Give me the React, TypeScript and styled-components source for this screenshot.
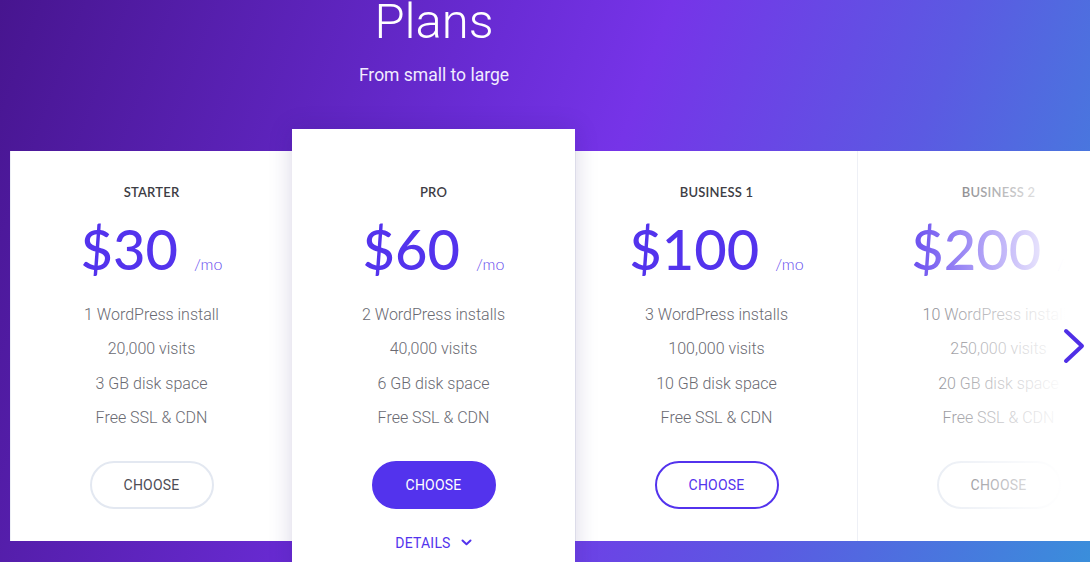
import React from "react";
import styled, { createGlobalStyle, css } from "styled-components";

const Global = createGlobalStyle`
  html, body { margin: 0; padding: 0; }
  body { width: 1090px; height: 562px; overflow: hidden; font-family: Roboto, "Liberation Sans", sans-serif; }
`;

const Page = styled.div`
  position: relative;
  width: 1090px;
  height: 562px;
  overflow: hidden;
  background: linear-gradient(110deg, #47158f 0%, #6a2cd6 40%, #7634e8 52%, #5b5ae2 75%, #3a8edb 100%);
`;

const Header = styled.header`
  width: 868px;
  display: flex;
  flex-direction: column;
  align-items: center;
  color: #fff;
`;

const Title = styled.h1`
  margin: -6px 0 0;
  font-family: Roboto, sans-serif;
  font-weight: 300;
  font-size: 49px;
  line-height: 56px;
`;

const Subtitle = styled.p`
  margin: 15px 0 0;
  font-family: Roboto, sans-serif;
  font-weight: 400;
  font-size: 17.5px;
  line-height: 20px;
  color: #f1ecff;
`;

const Row = styled.div`
  display: flex;
  align-items: flex-start;
  margin: 44px 0 0 10px;
`;

const Card = styled.section<{ $featured?: boolean }>`
  position: relative;
  flex: 0 0 auto;
  width: 282px;
  height: 390px;
  margin-top: 22px;
  box-sizing: border-box;
  padding-top: 33px;
  background: #fff;
  display: flex;
  flex-direction: column;
  align-items: center;
  border-left: 1px solid #eef0f6;
  ${(p) =>
    p.$featured &&
    css`
      width: 283px;
      height: 460px;
      margin-top: 0;
      padding-top: 55px;
      border-left: none;
      z-index: 2;
      box-shadow: 0 0 22px rgba(40, 20, 110, 0.18);
    `}
`;

const Fade = styled.div`
  position: absolute;
  inset: 0;
  pointer-events: none;
  background: linear-gradient(
    to right,
    rgba(255, 255, 255, 0) 30px,
    rgba(255, 255, 255, 1) 207px
  );
`;

const PlanName = styled.h2`
  margin: 0;
  font-family: Lato, "Liberation Sans", sans-serif;
  font-weight: 600;
  font-size: 13px;
  line-height: 16px;
  color: #3d3d45;
  letter-spacing: 0.2px;
`;

const PriceRow = styled.div`
  display: flex;
  align-items: baseline;
  margin-top: 19px;
`;

const Price = styled.span`
  font-family: Lato, "Liberation Sans", sans-serif;
  font-weight: 500;
  font-size: 56px;
  line-height: 60px;
  color: #5333ed;
`;

const Per = styled.span`
  margin-left: 16px;
  font-family: Lato, sans-serif;
  font-weight: 300;
  font-size: 16px;
  color: #6347ee;
`;

const Features = styled.ul`
  list-style: none;
  margin: 19px 0 0;
  padding: 0;
  text-align: center;
`;

const Feature = styled.li`
  font-family: Roboto, sans-serif;
  font-weight: 300;
  font-size: 16px;
  line-height: 34.4px;
  color: #6a6a72;
`;

const Choose = styled.button<{ $variant: "plain" | "filled" | "outline" }>`
  margin-top: 25px;
  width: 124px;
  height: 48px;
  border-radius: 24px;
  box-sizing: border-box;
  font-family: Roboto, sans-serif;
  font-size: 14px;
  font-weight: 400;
  letter-spacing: 0.2px;
  cursor: pointer;
  ${(p) =>
    p.$variant === "filled"
      ? css`
          background: #5333ed;
          border: 2px solid #5333ed;
          color: #fff;
        `
      : p.$variant === "outline"
      ? css`
          background: #fff;
          border: 2px solid #5333ed;
          color: #5333ed;
        `
      : css`
          background: #fff;
          border: 2px solid #e3e8f1;
          color: #4d4d55;
        `}
`;

const Details = styled.button`
  margin-top: 26px;
  display: flex;
  align-items: center;
  gap: 10px;
  background: none;
  border: none;
  padding: 0;
  font-family: Roboto, sans-serif;
  font-size: 14px;
  color: #5333ed;
  letter-spacing: 0.2px;
  cursor: pointer;
`;

const NextArrow = styled.button`
  position: absolute;
  right: 4px;
  top: 327px;
  width: 24px;
  height: 38px;
  padding: 0;
  background: none;
  border: none;
  cursor: pointer;
  z-index: 5;
`;

type Plan = {
  name: string;
  price: string;
  features: string[];
  variant: "plain" | "filled" | "outline";
  featured?: boolean;
  faded?: boolean;
};

const plans: Plan[] = [
  {
    name: "STARTER",
    price: "$30",
    features: ["1 WordPress install", "20,000 visits", "3 GB disk space", "Free SSL & CDN"],
    variant: "plain",
  },
  {
    name: "PRO",
    price: "$60",
    features: ["2 WordPress installs", "40,000 visits", "6 GB disk space", "Free SSL & CDN"],
    variant: "filled",
    featured: true,
  },
  {
    name: "BUSINESS 1",
    price: "$100",
    features: ["3 WordPress installs", "100,000 visits", "10 GB disk space", "Free SSL & CDN"],
    variant: "outline",
  },
  {
    name: "BUSINESS 2",
    price: "$200",
    features: ["10 WordPress installs", "250,000 visits", "20 GB disk space", "Free SSL & CDN"],
    variant: "plain",
    faded: true,
  },
];

export default function App() {
  return (
    <>
      <Global />
      <Page>
        <Header>
          <Title>Plans</Title>
          <Subtitle>From small to large</Subtitle>
        </Header>
        <Row>
          {plans.map((p) => (
            <Card key={p.name} $featured={p.featured}>
              <PlanName>{p.name}</PlanName>
              <PriceRow>
                <Price>{p.price}</Price>
                <Per>/mo</Per>
              </PriceRow>
              <Features>
                {p.features.map((f) => (
                  <Feature key={f}>{f}</Feature>
                ))}
              </Features>
              <Choose $variant={p.variant}>CHOOSE</Choose>
              {p.featured && (
                <Details>
                  DETAILS
                  <svg width="11" height="7" viewBox="0 0 11 7" fill="none">
                    <path d="M1.5 1.5 L5.5 5.2 L9.5 1.5" stroke="#5333ed" strokeWidth="2" strokeLinecap="round" strokeLinejoin="round" />
                  </svg>
                </Details>
              )}
              {p.faded && <Fade />}
            </Card>
          ))}
        </Row>
        <NextArrow aria-label="Next">
          <svg width="24" height="38" viewBox="0 0 24 38" fill="none">
            <path d="M4 4 L20 19 L4 34" stroke="#4f2fe6" strokeWidth="4" strokeLinecap="round" strokeLinejoin="round" />
          </svg>
        </NextArrow>
      </Page>
    </>
  );
}
